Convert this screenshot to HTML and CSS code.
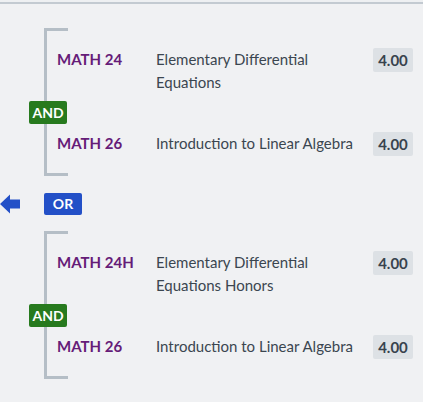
FILE: index.html
```html
<!DOCTYPE html>
<html>
<head>
<meta charset="utf-8">
<link rel="stylesheet" href="styles.css">
</head>
<body>
<div class="topbar"></div>
<div class="content">
  <div class="group">
    <div class="course">
      <div class="code">MATH 24</div>
      <div class="title">Elementary Differential Equations</div>
      <div class="units">4.00</div>
    </div>
    <div class="conn"><span class="badge and">AND</span></div>
    <div class="course">
      <div class="code">MATH 26</div>
      <div class="title">Introduction to Linear Algebra</div>
      <div class="units">4.00</div>
    </div>
  </div>
  <div class="or-row">
    <svg class="arrow" width="20" height="20" viewBox="0 0 20 20"><path d="M0 10 L10 0.5 L10 5.5 L20 5.5 L20 14.5 L10 14.5 L10 19.5 Z" fill="#2350c7"/></svg>
    <span class="badge or">OR</span>
  </div>
  <div class="group">
    <div class="course">
      <div class="code">MATH 24H</div>
      <div class="title">Elementary Differential Equations Honors</div>
      <div class="units">4.00</div>
    </div>
    <div class="conn"><span class="badge and">AND</span></div>
    <div class="course">
      <div class="code">MATH 26</div>
      <div class="title">Introduction to Linear Algebra</div>
      <div class="units">4.00</div>
    </div>
  </div>
</div>
</body>
</html>
```

FILE: styles.css
```css
* { box-sizing: border-box; }
html, body { margin: 0; padding: 0; }
body {
  background: #f0f1f3;
  font-family: "Source Sans Pro", Lato, "Liberation Sans", sans-serif;
  font-size: 15px;
  width: 423px;
  height: 402px;
  overflow: hidden;
}
.topbar {
  height: 4px;
  background: #eef0f2;
  border-bottom: 2px solid #c3cad1;
}
.content {
  padding-top: 24px;
}
.group {
  position: relative;
  margin-left: 44px;
  margin-right: 10px;
  border-left: 3px solid #b5bec6;
  padding: 20px 0;
}
.group::before,
.group::after {
  content: "";
  position: absolute;
  left: -3px;
  width: 24px;
  height: 3px;
  background: #b5bec6;
}
.group::before { top: 0; }
.group::after { bottom: 0; }
.course {
  display: flex;
  align-items: flex-start;
  padding-left: 10px;
  line-height: 23px;
}
.code {
  width: 99px;
  flex: none;
  font-weight: 700;
  color: #661c78;
}
.title {
  flex: 1;
  color: #3b4650;
  padding-right: 8px;
}
.units {
  flex: none;
  width: 40px;
  height: 24px;
  line-height: 24px;
  text-align: center;
  background: #dde1e5;
  color: #38434d;
  font-weight: 700;
  border-radius: 2px;
}
.conn {
  margin: 7px 0 8px -18px;
  height: 23px;
}
.badge {
  display: inline-block;
  width: 38px;
  height: 23px;
  line-height: 23px;
  text-align: center;
  color: #fff;
  font-weight: 700;
  font-size: 14px;
  border-radius: 2px;
}
.and { background: #277a1e; }
.or { background: #2350c7; height: 22px; line-height: 22px; }
.or-row {
  display: flex;
  align-items: center;
  height: 22px;
  margin: 17px 0 16px 0;
}
.arrow { flex: none; margin-right: 24px; }
```
